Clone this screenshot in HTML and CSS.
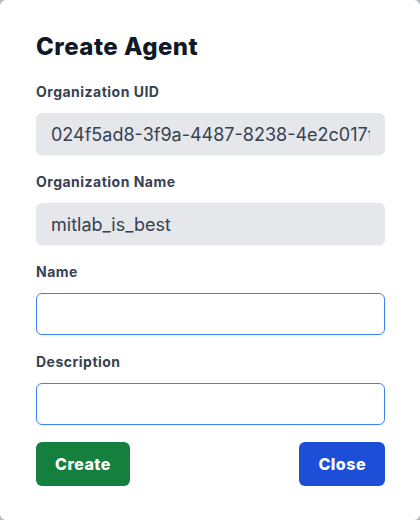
FILE: index.html
```html
<!DOCTYPE html>
<html lang="en">
<head>
<meta charset="utf-8">
<title>Create Agent</title>
<link rel="stylesheet" href="styles.css">
</head>
<body>
<div class="modal">
  <h1 class="title">Create Agent</h1>
  <form class="form">
    <div class="field">
      <label class="label">Organization UID</label>
      <input class="input readonly" type="text" value="024f5ad8-3f9a-4487-8238-4e2c017f9b1a" readonly>
    </div>
    <div class="field">
      <label class="label">Organization Name</label>
      <input class="input readonly" type="text" value="mitlab_is_best" readonly>
    </div>
    <div class="field">
      <label class="label">Name</label>
      <input class="input editable" type="text">
    </div>
    <div class="field">
      <label class="label">Description</label>
      <input class="input editable" type="text">
    </div>
    <div class="actions">
      <button type="button" class="btn btn-create">Create</button>
      <button type="button" class="btn btn-close">Close</button>
    </div>
  </form>
</div>
</body>
</html>
```

FILE: styles.css
```css
* { box-sizing: border-box; }
html, body {
  margin: 0;
  padding: 0;
  background: #b4b7bc;
  font-family: Inter, "Noto Sans", sans-serif;
}
.modal {
  width: 420px;
  height: 520px;
  background: #ffffff;
  border-radius: 6px;
  padding: 31px 35px 0 36px;
}
.title {
  margin: 0;
  font-size: 24px;
  line-height: 32px;
  font-weight: 800;
  letter-spacing: 0.02em;
  color: #111827;
}
.form {
  display: flex;
  flex-direction: column;
  gap: 17px;
  margin-top: 19px;
}
.field {
  display: flex;
  flex-direction: column;
}
.label {
  font-size: 14px;
  line-height: 20px;
  font-weight: 700;
  letter-spacing: 0.035em;
  color: #374151;
  margin-bottom: 11px;
}
.input {
  width: 100%;
  height: 42px;
  border-radius: 6px;
  font-family: Inter, "Noto Sans", sans-serif;
  font-size: 18px;
  color: #374151;
  padding: 0 14px;
  outline: none;
}
.readonly {
  background: #e5e7eb;
  border: 1px solid #e5e7eb;
  box-shadow: 0 1px 2px rgba(0,0,0,0.05);
}
.editable {
  background: #ffffff;
  border: 1px solid #3b82f6;
  box-shadow: 0 1px 2px rgba(0,0,0,0.05);
}
.actions {
  display: flex;
  justify-content: space-between;
}
.btn {
  height: 44px;
  border: none;
  border-radius: 6px;
  padding: 0 19px;
  font-family: Inter, "Noto Sans", sans-serif;
  font-size: 16px;
  font-weight: 800;
  letter-spacing: 0.03em;
  color: #ffffff;
}
.btn-create { background: #15803d; }
.btn-close { background: #1d4ed8; }
```
